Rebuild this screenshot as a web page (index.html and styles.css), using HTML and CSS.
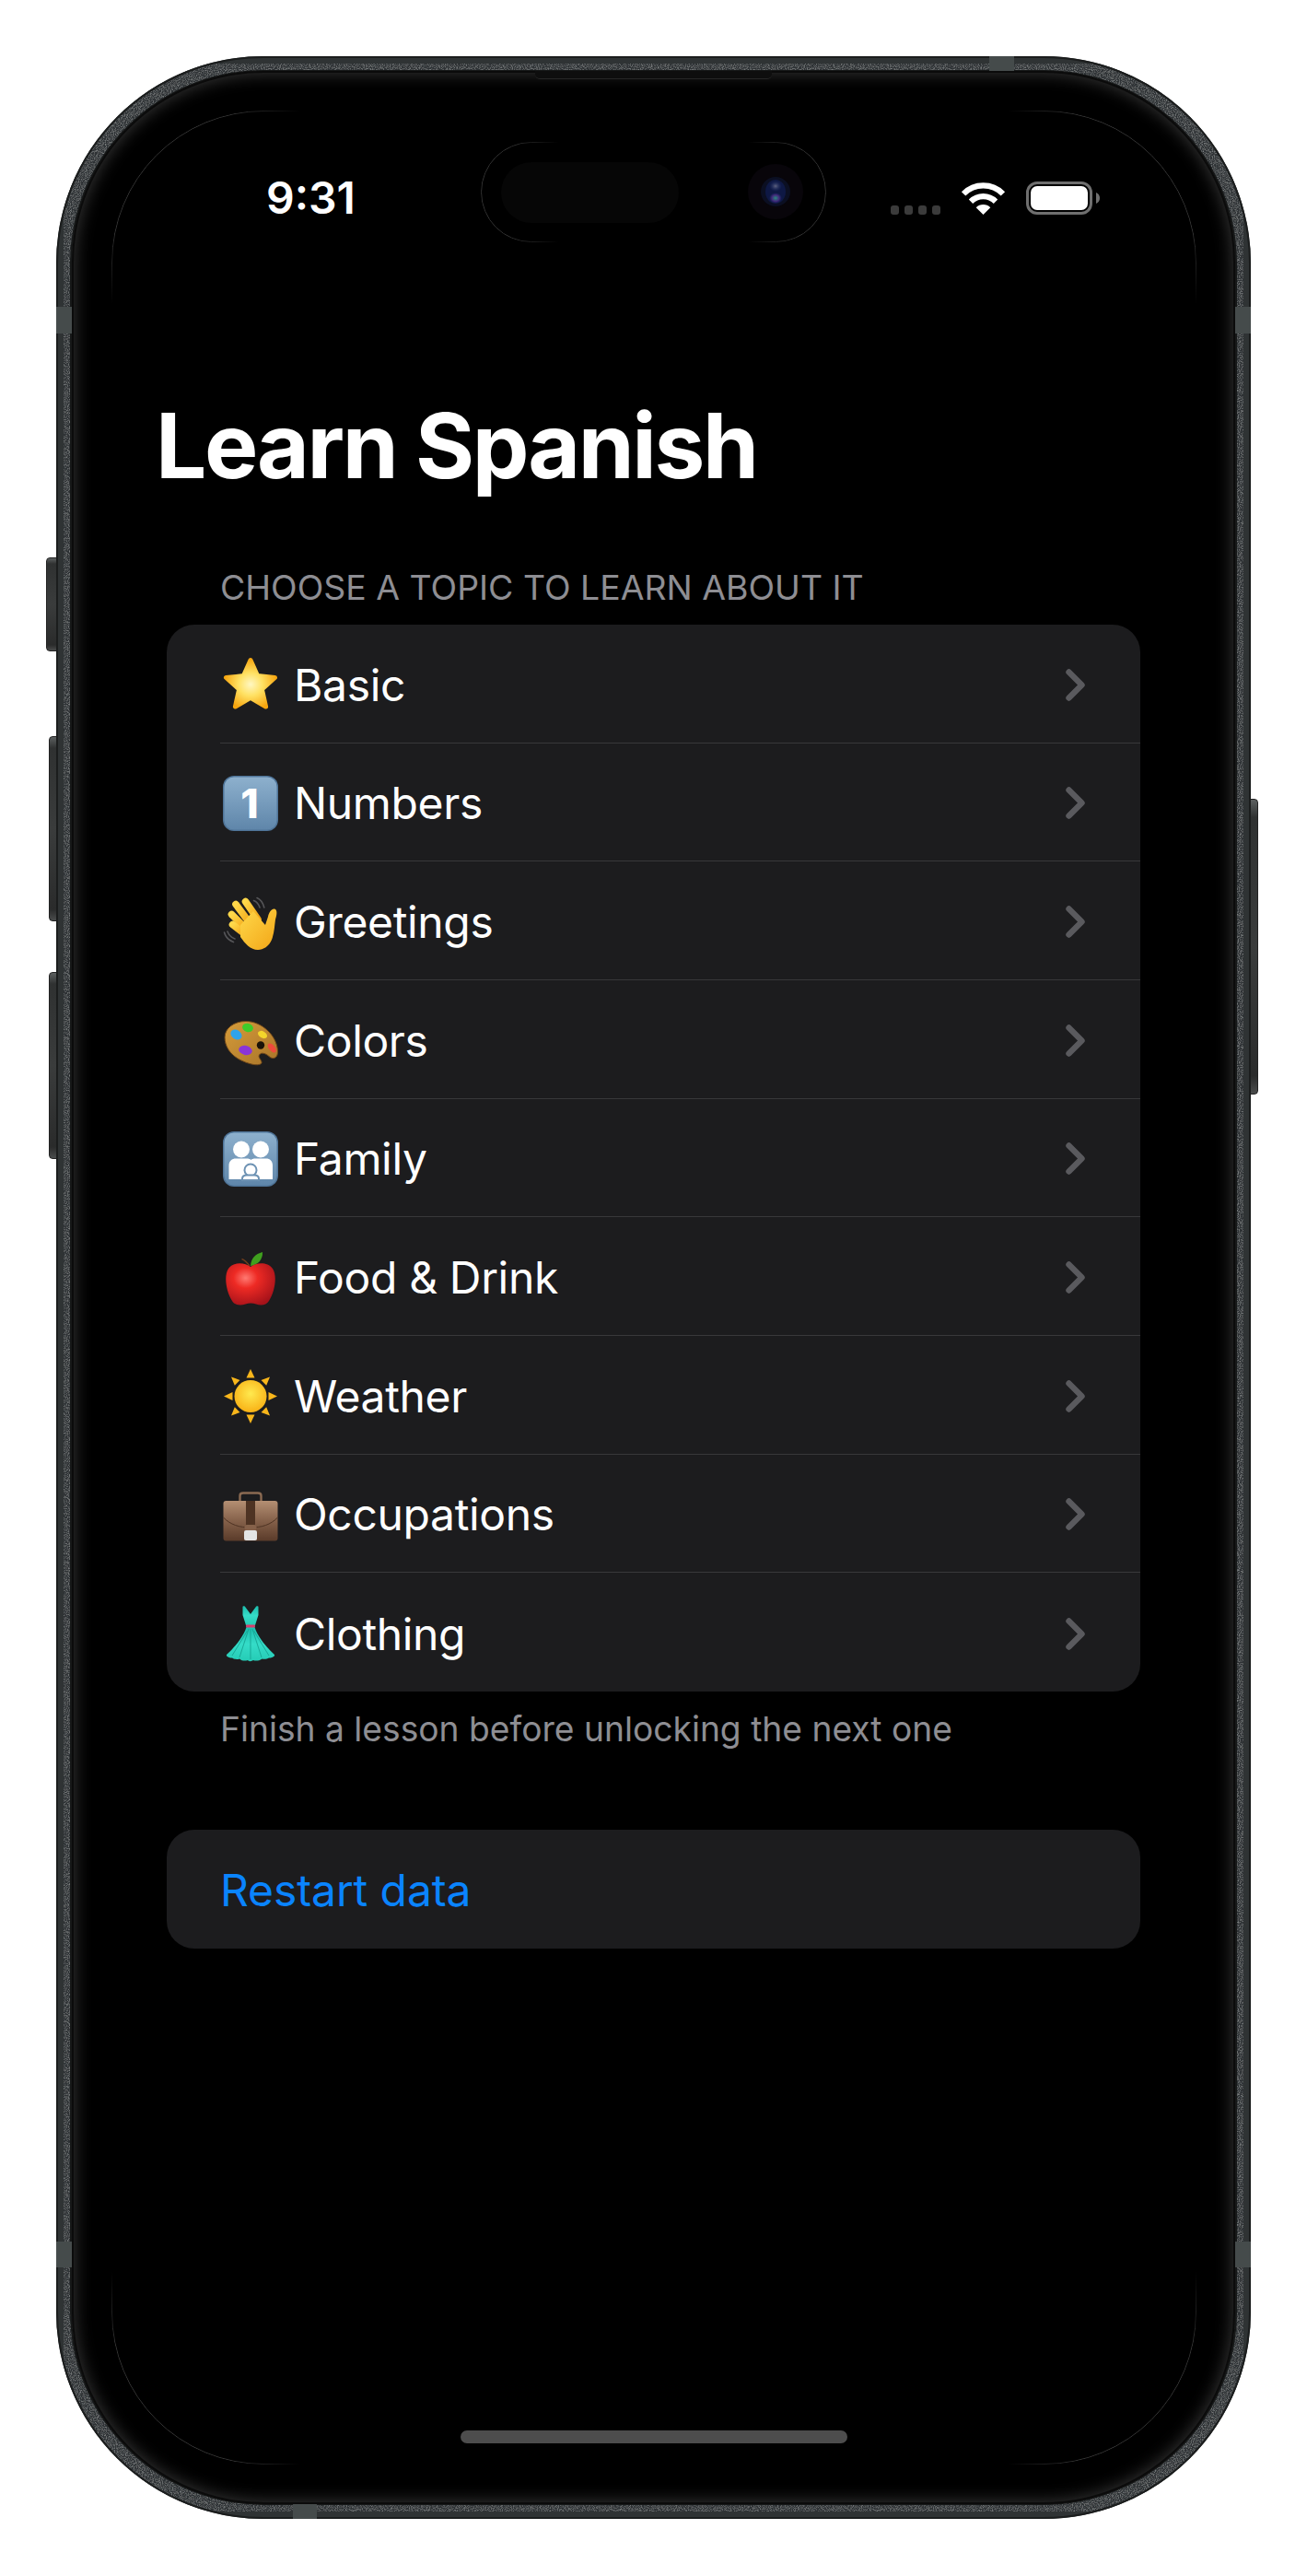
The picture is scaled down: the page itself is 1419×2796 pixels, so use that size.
FILE: index.html
```html
<!DOCTYPE html>
<html lang="en">
<head>
<meta charset="utf-8">
<title>Learn Spanish</title>
<link rel="stylesheet" href="styles.css">
</head>
<body>
<div class="stage">
  <div class="phone">
    <span class="btn btn-action"></span>
    <span class="btn btn-vol-up"></span>
    <span class="btn btn-vol-down"></span>
    <span class="btn btn-power"></span>

    <svg class="bezel" width="1297" height="2673" viewBox="0 0 1297 2673" aria-hidden="true">
      <defs>
        <filter id="grain" x="0" y="0" width="100%" height="100%">
          <feTurbulence type="fractalNoise" baseFrequency="0.9" numOctaves="2" seed="4" result="n"/>
          <feColorMatrix in="n" type="matrix" values="0 0 0 0 0.55  0 0 0 0 0.58  0 0 0 0 0.58  0.8 0 0 0 -0.34" result="g"/>
          <feComposite in="g" in2="SourceAlpha" operator="in" result="gi"/>
          <feMerge><feMergeNode in="SourceGraphic"/><feMergeNode in="gi"/></feMerge>
        </filter>
      </defs>
      <rect x="8.5" y="8.5" width="1280" height="2656" rx="217" fill="none" stroke="#2f3334" stroke-width="17" filter="url(#grain)"/>
      <rect x="1" y="1" width="1295" height="2671" rx="224" fill="none" stroke="#1b1d1d" stroke-width="2"/>
      <rect x="16" y="16" width="1265" height="2641" rx="209" fill="none" stroke="#161818" stroke-width="2"/>
    </svg>
    <span class="band band-lt"></span>
    <span class="band band-rt"></span>
    <span class="band band-lb"></span>
    <span class="band band-rb"></span>
    <span class="band band-top"></span>
    <span class="band band-bottom"></span>

    <div class="screen">
      <span class="speaker"></span>
      <span class="screen-line"></span>
      <div class="island">
        <span class="island-pill"></span>
        <svg class="camera" width="60" height="60" viewBox="0 0 60 60" aria-hidden="true">
          <defs>
            <radialGradient id="lensTop" cx=".5" cy=".5" r=".5"><stop offset="0" stop-color="#5f6380"/><stop offset="1" stop-color="#1b2a66" stop-opacity="0"/></radialGradient>
            <radialGradient id="lensLow" cx=".5" cy=".5" r=".5"><stop offset="0" stop-color="#2a8a80"/><stop offset=".6" stop-color="#42267a"/><stop offset="1" stop-color="#1b2a66" stop-opacity="0"/></radialGradient>
          </defs>
          <circle cx="30" cy="30" r="30" fill="#08050a"/>
          <circle cx="30" cy="30" r="16" fill="#0b0f22"/>
          <ellipse cx="30" cy="30" rx="11" ry="13" fill="#0e1844"/>
          <ellipse cx="30" cy="24" rx="7" ry="6" fill="url(#lensTop)"/>
          <ellipse cx="30" cy="37" rx="7" ry="6" fill="url(#lensLow)"/>
        </svg>
      </div>

      <header class="status">
        <span class="time">9:31</span>
        <div class="status-icons">
          <div class="signal"><i></i><i></i><i></i><i></i></div>
          <svg class="wifi" width="49" height="36" viewBox="0 0 49 36" aria-hidden="true">
            <path d="M3.1 13.4A30 30 0 0 1 45.9 13.4" fill="none" stroke="#fff" stroke-width="6.2"/>
            <path d="M11 21.8A19 19 0 0 1 38 21.8" fill="none" stroke="#fff" stroke-width="6.2"/>
            <path d="M24.5 36L16.7 28.2A11 11 0 0 1 32.3 28.2Z" fill="#fff"/>
          </svg>
          <svg class="battery" width="80" height="36" viewBox="0 0 80 36" aria-hidden="true">
            <rect x="1.5" y="1.5" width="69" height="33" rx="10.5" fill="none" stroke="#6f6f6f" stroke-width="3"/>
            <rect x="5" y="5" width="62" height="26" rx="7" fill="#fff"/>
            <path d="M76 12C78.5 13 80 15.2 80 18S78.5 23 76 24Z" fill="#6f6f6f"/>
          </svg>
        </div>
      </header>

      <h1 class="title">Learn Spanish</h1>
      <p class="section-head">CHOOSE A TOPIC TO LEARN ABOUT IT</p>

      <ul class="card">
        <li class="row">
          <svg class="emoji" viewBox="0 0 60 60" aria-hidden="true">
            <defs><radialGradient id="starG" cx=".5" cy=".52" r=".55"><stop offset="0" stop-color="#fff7c2"/><stop offset=".45" stop-color="#ffe163"/><stop offset="1" stop-color="#f6a50f"/></radialGradient></defs>
            <path d="M30 3.5L37.6 20.6L56.5 22.5L42.4 35.2L46.6 54L30 44.4L13.4 54L17.6 35.2L3.5 22.5L22.4 20.6Z" fill="url(#starG)" stroke="url(#starG)" stroke-width="5" stroke-linejoin="round"/>
          </svg>
          <span class="label">Basic</span>
          <svg class="chevron" viewBox="0 0 21 35" aria-hidden="true"><path d="M3.5 3.5L17.5 17.5L3.5 31.5"/></svg>
        </li>
        <li class="row">
          <svg class="emoji" viewBox="0 0 60 60" aria-hidden="true">
            <defs><linearGradient id="capG" x1="0" y1="0" x2="0" y2="1"><stop offset="0" stop-color="#8db0cd"/><stop offset="1" stop-color="#5f86aa"/></linearGradient></defs>
            <rect x="0" y="0" width="60" height="60" rx="12" fill="#4f7498"/>
            <rect x="1.5" y="1.5" width="57" height="57" rx="10.5" fill="url(#capG)"/>
            <text x="29" y="46" text-anchor="middle" class="cap-digit">1</text>
          </svg>
          <span class="label">Numbers</span>
          <svg class="chevron" viewBox="0 0 21 35" aria-hidden="true"><path d="M3.5 3.5L17.5 17.5L3.5 31.5"/></svg>
        </li>
        <li class="row">
          <svg class="emoji" viewBox="0 0 60 60" aria-hidden="true">
            <defs><linearGradient id="handG" x1="0" y1="0" x2="1" y2="1"><stop offset="0" stop-color="#ffd84a"/><stop offset="1" stop-color="#f2a516"/></linearGradient></defs>
            <g fill="none" stroke="#555558" stroke-width="1.6" stroke-linecap="round">
              <path d="M37 3.5C40.5 5 43.5 9 44.8 14"/><path d="M33.5 6.5C36.5 7.5 38.8 10.5 40 14"/>
              <path d="M1.5 41C2.5 45 6 49.5 11.5 51.5"/><path d="M5 40C6 43 8.8 46.5 13 48"/>
            </g>
            <g fill="none" stroke="url(#handG)" stroke-width="7.6" stroke-linecap="round">
              <path d="M24.5 7.5L38 27"/><path d="M14 10.5L30 32"/><path d="M9.5 21.5L25 37"/><path d="M10.5 32.5L24 43"/>
            </g>
            <path d="M19 33L33 18L46 33L49 24C50 19 53 15 56 15.5C59.5 16.5 58.5 22 57 27C56 34 56 41 53 49C50 56 44 60 38 60C30 60 24 53 19 46Z" fill="url(#handG)"/>
          </svg>
          <span class="label">Greetings</span>
          <svg class="chevron" viewBox="0 0 21 35" aria-hidden="true"><path d="M3.5 3.5L17.5 17.5L3.5 31.5"/></svg>
        </li>
        <li class="row">
          <svg class="emoji" viewBox="0 0 60 60" aria-hidden="true">
            <defs><linearGradient id="palG" x1="0" y1="0" x2="1" y2="1"><stop offset="0" stop-color="#d69c3a"/><stop offset="1" stop-color="#a87429"/></linearGradient></defs>
            <path d="M2 27C2 17 12 9.5 25 9.5C42 9.5 59 25 59.5 42C59.8 50 54 51.5 50 47.5C46 44 41.5 43 39.5 46C37.5 49 44 53 41.5 55.5C38 58.5 27 56 17 50.5C8 45.5 2 36.5 2 27Z" fill="url(#palG)" stroke="#6d4519" stroke-width="1"/>
            <ellipse cx="14.5" cy="24" rx="6.5" ry="5" fill="#2ea3ea" transform="rotate(35 14.5 24)"/>
            <ellipse cx="27" cy="16.5" rx="6" ry="4.6" fill="#3ecb2a" transform="rotate(15 27 16.5)"/>
            <ellipse cx="43" cy="24" rx="5.4" ry="3.6" fill="#f3d52b" transform="rotate(30 43 24)"/>
            <circle cx="41" cy="35.5" r="4.2" fill="#1a1208"/>
            <ellipse cx="53.3" cy="38.5" rx="6" ry="3.2" fill="#ee4a3c" transform="rotate(50 53.3 38.5)"/>
            <ellipse cx="24.5" cy="41" rx="7.4" ry="5" fill="#8a35d8" transform="rotate(12 24.5 41)"/>
          </svg>
          <span class="label">Colors</span>
          <svg class="chevron" viewBox="0 0 21 35" aria-hidden="true"><path d="M3.5 3.5L17.5 17.5L3.5 31.5"/></svg>
        </li>
        <li class="row">
          <svg class="emoji" viewBox="0 0 60 60" aria-hidden="true">
            <defs><linearGradient id="famG" x1="0" y1="0" x2="0" y2="1"><stop offset="0" stop-color="#8db0cd"/><stop offset="1" stop-color="#5f86aa"/></linearGradient></defs>
            <rect x="0" y="0" width="60" height="60" rx="12" fill="#4f7498"/>
            <rect x="1.5" y="1.5" width="57" height="57" rx="10.5" fill="url(#famG)"/>
            <circle cx="20" cy="19.5" r="9" fill="#fff"/><circle cx="41" cy="19.5" r="9" fill="#fff"/>
            <path d="M6.5 52V37C6.5 32 10 29.5 14 29.5H26C28 29.5 29.5 30 30.5 31C31.5 30 33 29.5 35 29.5H47C51 29.5 54 32 54 37V52Z" fill="#fff"/>
            <circle cx="30" cy="42" r="6.5" fill="#fff" stroke="#6d92b3" stroke-width="2"/>
            <path d="M21 53V51.5C21 48.5 23.5 47.5 26 47.5H34C36.5 47.5 39 48.5 39 51.5V53Z" fill="#fff" stroke="#6d92b3" stroke-width="2"/>
          </svg>
          <span class="label">Family</span>
          <svg class="chevron" viewBox="0 0 21 35" aria-hidden="true"><path d="M3.5 3.5L17.5 17.5L3.5 31.5"/></svg>
        </li>
        <li class="row">
          <svg class="emoji" viewBox="0 0 60 60" aria-hidden="true">
            <defs><radialGradient id="appleG" cx=".4" cy=".35" r=".7"><stop offset="0" stop-color="#ff7a72"/><stop offset=".35" stop-color="#ee2a24"/><stop offset="1" stop-color="#a5121a"/></radialGradient></defs>
            <path d="M29 17C25 12 22 10 20.5 9.5" fill="none" stroke="#6e3d1c" stroke-width="1.6"/>
            <path d="M30 17C30.5 9 35 4 43 2C43.5 10 38 16 30 17Z" fill="#3f9f1e"/>
            <path d="M30 18C36 13.5 48 12 54 20C59 27 57 44 50 55C47 60 41 60.5 36 58.5C32.5 57 28 57 24.5 58.5C19 60.5 13 60 10 55C3 44 1 27 6 20C12 12 24 13.5 30 18Z" fill="url(#appleG)"/>
          </svg>
          <span class="label">Food &amp; Drink</span>
          <svg class="chevron" viewBox="0 0 21 35" aria-hidden="true"><path d="M3.5 3.5L17.5 17.5L3.5 31.5"/></svg>
        </li>
        <li class="row">
          <svg class="emoji" viewBox="0 0 60 60" aria-hidden="true">
            <defs><radialGradient id="sunG" cx=".5" cy=".42" r=".6"><stop offset="0" stop-color="#ffe94f"/><stop offset="1" stop-color="#f8b014"/></radialGradient></defs>
            <circle cx="30" cy="30.5" r="17.5" fill="url(#sunG)"/>
            <g fill="#f8b61b">
              <path d="M30 1L34.5 10.5H25.5Z"/><path d="M30 60L34.5 50.5H25.5Z"/>
              <path d="M1 30.5L10.5 26V35Z"/><path d="M59 30.5L49.5 26V35Z"/>
              <path d="M9 9.5L18.5 13L12.8 18.8Z"/><path d="M51 9.5L41.5 13L47.2 18.8Z"/>
              <path d="M9 51.5L18.5 48L12.8 42.2Z"/><path d="M51 51.5L41.5 48L47.2 42.2Z"/>
            </g>
          </svg>
          <span class="label">Weather</span>
          <svg class="chevron" viewBox="0 0 21 35" aria-hidden="true"><path d="M3.5 3.5L17.5 17.5L3.5 31.5"/></svg>
        </li>
        <li class="row">
          <svg class="emoji" viewBox="0 0 60 60" aria-hidden="true">
            <defs><linearGradient id="caseG" x1="0" y1="0" x2="0" y2="1"><stop offset="0" stop-color="#b48f73"/><stop offset=".5" stop-color="#85614a"/><stop offset="1" stop-color="#5a3b2a"/></linearGradient></defs>
            <path d="M18.5 16V9.5C18.5 7.5 20 6.5 22 6.5H38C40 6.5 41.5 7.5 41.5 9.5V16" fill="none" stroke="#8a6a52" stroke-width="2.4"/>
            <rect x="0.5" y="15" width="59" height="43.5" rx="3" fill="url(#caseG)"/>
            <path d="M0.5 33C8 41 18 44 30 44C42 44 52 41 59.5 33" fill="none" stroke="#4e3323" stroke-width="1"/>
            <rect x="25" y="15" width="10" height="27" fill="#4e3323"/>
            <rect x="23.5" y="41" width="13" height="6" rx="2.5" fill="#85614a"/>
            <rect x="23" y="47" width="14" height="11" rx="2" fill="#e4e4e4"/>
          </svg>
          <span class="label">Occupations</span>
          <svg class="chevron" viewBox="0 0 21 35" aria-hidden="true"><path d="M3.5 3.5L17.5 17.5L3.5 31.5"/></svg>
        </li>
        <li class="row">
          <svg class="emoji" viewBox="0 0 60 60" aria-hidden="true">
            <defs><linearGradient id="dressG" x1="0" y1="0" x2="0" y2="1"><stop offset="0" stop-color="#1bbdad"/><stop offset=".5" stop-color="#35dcc8"/><stop offset="1" stop-color="#25cbb5"/></linearGradient></defs>
            <path d="M21.5 1C21.5 0 24 0 24.5 1.5L30 9L35.5 1.5C36 0 38.5 0 38.5 1L38.5 10L35 21H25L21.5 10Z" fill="url(#dressG)"/>
            <path d="M25.5 23H34.5C37 32 46 44 56 53C57 55 52 57 50 56.5C48 58 44 58 42.5 57.5C39 60 35 60 33 59C31 60.5 28 60.5 27 59C24 60 21 60 18 57.5C15.5 58.5 12 58 10 56.5C8 57 3 55 4 53C14 44 23 32 25.5 23Z" fill="url(#dressG)"/>
            <g fill="none" stroke="#17a493" stroke-width="0.9"><path d="M28 25L18 56"/><path d="M30 25V58"/><path d="M32 25L42 56"/><path d="M26.5 27L10 54"/><path d="M33.5 27L50 54"/></g>
            <rect x="25" y="20.5" width="10" height="3" rx="1" fill="#d63f6e"/>
          </svg>
          <span class="label">Clothing</span>
          <svg class="chevron" viewBox="0 0 21 35" aria-hidden="true"><path d="M3.5 3.5L17.5 17.5L3.5 31.5"/></svg>
        </li>
      </ul>

      <p class="section-foot">Finish a lesson before unlocking the next one</p>

      <div class="card card-action">
        <span class="action-label">Restart data</span>
      </div>

      <span class="home"></span>
    </div>
  </div>
</div>
</body>
</html>
```
FILE: styles.css
```css
* { box-sizing: border-box; }
html, body { margin: 0; background: #fff; }
body { font-family: Inter, "Liberation Sans", sans-serif; color: #fff; }
.stage { width: 1419px; height: 2796px; padding: 61px 0 0 61px; overflow: hidden; }
.phone { position: relative; width: 1297px; height: 2673px; padding: 16px 17px; border-radius: 225px; background: #2f3334; }

.bezel { position: absolute; left: 0; top: 0; }

.band { position: absolute; background: #454b4b; }
.band-lt, .band-rt { top: 272px; width: 17px; height: 29px; }
.band-lb, .band-rb { top: 2372px; width: 17px; height: 28px; }
.band-lt, .band-lb { left: 0; }
.band-rt, .band-rb { right: 0; }
.band-top { top: 0; left: 1013px; width: 27px; height: 16px; }
.band-bottom { bottom: 0; left: 257px; width: 26px; height: 16px; }

.btn { position: absolute; background: linear-gradient(180deg, #5c6060 0, #2f3131 6%, #3a3c3c 50%, #2a2b2b 94%, #4a4c4c 100%); border: 1px solid #222; }
.btn-action { left: -11px; top: 544px; width: 12px; height: 102px; border-radius: 4px 0 0 4px; }
.btn-vol-up { left: -8px; top: 738px; width: 9px; height: 201px; border-radius: 4px 0 0 4px; }
.btn-vol-down { left: -8px; top: 994px; width: 9px; height: 203px; border-radius: 4px 0 0 4px; }
.btn-power { right: -8px; top: 806px; width: 9px; height: 321px; border-radius: 0 4px 4px 0; }

.screen { position: relative; display: flex; flex-direction: column; height: 100%; border-radius: 208px; background: #000; box-shadow: inset 0 0 0 2px #0b0b0b, inset 0 0 18px 3px #363636; }

.speaker { position: absolute; left: 503px; top: 0; width: 257px; height: 9px; border-radius: 0 0 5px 5px; background: #0e0e0e; border-bottom: 1px solid #262626; }
.screen-line { position: absolute; left: 43px; top: 43px; right: 42px; bottom: 43px; border: 1px solid #353535; border-radius: 165px; pointer-events: none;
  -webkit-mask-image: linear-gradient(90deg, #000 130px, transparent 205px, transparent calc(100% - 205px), #000 calc(100% - 130px)), linear-gradient(180deg, #000 130px, transparent 210px, transparent calc(100% - 210px), #000 calc(100% - 130px));
  -webkit-mask-composite: source-in;
  mask-image: linear-gradient(90deg, #000 130px, transparent 205px, transparent calc(100% - 205px), #000 calc(100% - 130px)), linear-gradient(180deg, #000 130px, transparent 210px, transparent calc(100% - 210px), #000 calc(100% - 130px));
  mask-composite: intersect; }

.island { position: absolute; left: 444px; top: 77px; width: 375px; height: 109px; border-radius: 55px; background: #000; }
.island::before { content: ""; position: absolute; inset: 0; border: 1px solid #333; border-radius: 55px;
  -webkit-mask-image: linear-gradient(90deg, #000 30px, transparent 85px, transparent calc(100% - 85px), #000 calc(100% - 30px));
  mask-image: linear-gradient(90deg, #000 30px, transparent 85px, transparent calc(100% - 85px), #000 calc(100% - 30px)); }
.island-pill { position: absolute; left: 22px; top: 22px; width: 193px; height: 66px; border-radius: 33px; background: #060606; }
.camera { position: absolute; left: 290px; top: 24px; }

.status { display: flex; align-items: flex-start; height: 347px; padding: 120px 147px 0 211px; }
.time { font-size: 48px; line-height: 36px; font-weight: 600; }
.status-icons { display: flex; align-items: flex-end; margin-left: auto; height: 36px; }
.signal { display: flex; gap: 6px; margin-right: 22px; }
.signal i { width: 9px; height: 10px; border-radius: 3px; background: #3b3b3b; }
.wifi { margin-right: 22px; }
.battery { display: block; }

.title { margin: 0 0 0 91px; font-size: 98px; line-height: 120px; font-weight: 700; letter-spacing: -2.4px; }
.section-head { margin: 71px 0 17px 161px; font-size: 37.4px; line-height: 46px; font-weight: 400; color: #8e8e93; }

.card { list-style: none; margin: 0 0 0 103px; padding: 0; width: 1057px; border-radius: 30px; background: #1c1c1e; }
.row { display: flex; align-items: center; height: 128.67px; margin-left: 58px; padding: 3px 60px 0 0; border-bottom: 1px solid #38383a; }
.row:last-child { border-bottom: 0; }
.emoji { flex: none; width: 60px; height: 60px; margin-left: 3px; margin-right: 17px; overflow: visible; }
.label { margin-top: 1px; font-size: 48px; line-height: 58px; font-weight: 400; letter-spacing: -0.35px; }
.chevron { flex: none; width: 21px; height: 35px; margin-left: auto; }
.chevron path { fill: none; stroke: #5a5a5e; stroke-width: 6.4; stroke-linecap: round; stroke-linejoin: round; }
.cap-digit { font-family: Inter, "Liberation Sans", sans-serif; font-size: 44px; font-weight: 800; fill: #fff; }

.section-foot { margin: 18px 0 0 161px; font-size: 37.2px; line-height: 46px; color: #8e8e93; }
.card-action { display: flex; align-items: center; height: 129px; margin-top: 86px; padding: 3px 0 0 58px; }
.action-label { font-size: 48px; line-height: 58px; letter-spacing: -0.1px; color: #0a84ff; }

.home { align-self: center; flex: none; width: 420px; height: 14px; margin: auto 0 66px; border-radius: 7px; background: #4d4d4d; }
```
